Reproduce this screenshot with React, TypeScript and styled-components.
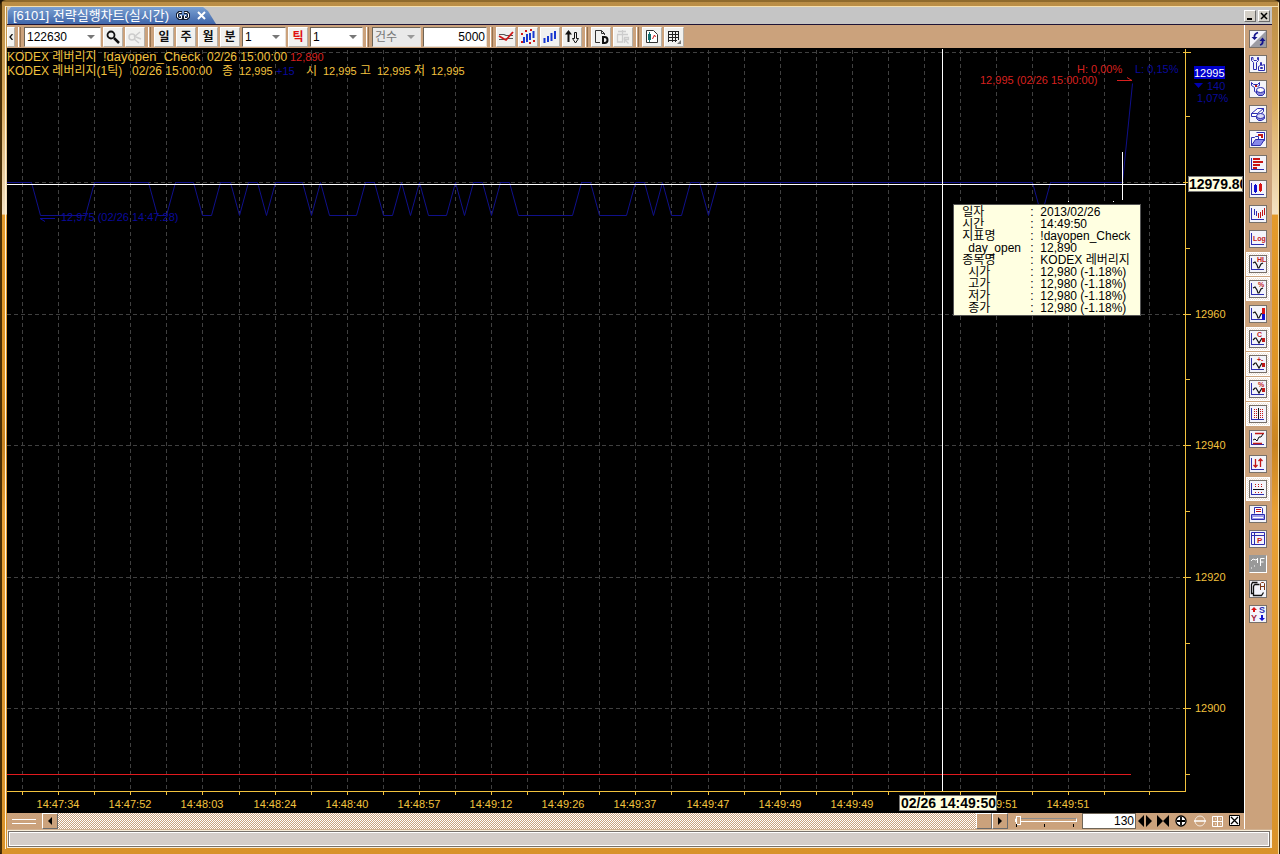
import React from 'react';
import styled, { createGlobalStyle, css } from 'styled-components';

const SANS = '"Liberation Sans", "Noto Sans CJK KR", sans-serif';
const TAN = '#cba27c';
const YELLOW = '#f2c23e';
const RED = '#d8201f';
const NAVY = '#0a0a9c';
const INK = '#2c2cb0';

const GlobalStyle = createGlobalStyle`
  * { box-sizing: border-box; }
  body { margin: 0; background: #1c1408; }
  button, input, select { font: inherit; margin: 0; padding: 0; }
`;

const Frame = styled.main`
  display: flex;
  flex-direction: column;
  padding: 7px 8px 7px 7px;
  font: 12px/16px ${SANS};
  background:
    linear-gradient(#f6dfae, #f6dfae) 6px 6px / calc(100% - 8px) 1px no-repeat,
    linear-gradient(#fff3d8, #fff3d8) 5px 6px / 1px calc(100% - 12px) no-repeat,
    linear-gradient(#4a3008, #4a3008) 0 0 / 2px 100% no-repeat,
    linear-gradient(#2a1a04, #2a1a04) 100% 0 / 1px 100% no-repeat,
    linear-gradient(#f8dca0, #f8dca0) calc(100% - 1px) 0 / 1px 100% no-repeat,
    linear-gradient(#2a1a04, #2a1a04) 0 100% / 100% 1px no-repeat,
    linear-gradient(#8f6a2c, #8f6a2c) 0 0 / 100% 2px no-repeat,
    linear-gradient(#b98c44 0, #d9a95c 12%, #f3e2c4 25%, #e39a2c 25.2%, #dd9426 45%, #c98422 52%, #e8a036 60%, #d8922a 100%);
  border-radius: 6px 6px 4px 4px;
`;

const TabStrip = styled.header`
  display: flex;
  align-items: stretch;
  height: 18px;
  padding-left: 1px;
  background: #c5c5c5;
  border-bottom: 1px solid #1e1436;
`;

const Tab = styled.h1`
  display: flex;
  align-items: center;
  gap: 7px;
  margin: 0;
  width: 208px;
  padding: 0 0 0 5px;
  color: #fff;
  font: 13px/17px ${SANS};
  white-space: nowrap;
  background: linear-gradient(#7aa0d2, #3f66aa);
  clip-path: polygon(3px 0, 195px 0, 200px 4px, 208px 100%, 0 100%, 0 4px);
`;

const TabClose = styled.button`
  display: flex;
  border: 0;
  background: none;
`;

const WindowButtons = styled.div`
  display: flex;
  gap: 2px;
  margin-left: auto;
  padding: 3px 2px 2px 0;
`;

const bevel = css`
  border: 1px solid;
  border-color: #fff #6b6b6b #6b6b6b #fff;
`;

const WindowButton = styled.button`
  display: flex;
  width: 12px;
  height: 12px;
  background: #d4d0c8;
  ${bevel}
`;

const Body = styled.div`
  display: flex;
`;

const MainColumn = styled.div`
  display: flex;
  flex-direction: column;
  flex: 1;
  min-width: 0;
`;

const Toolbar = styled.div`
  display: flex;
  align-items: center;
  gap: 2px;
  height: 23px;
  background: ${TAN};
`;

const Separator = styled.span`
  width: 3px;
  height: 20px;
  margin: 0 1px;
  border-left: 1px solid #fff;
  border-right: 1px solid #94714f;
`;

const ToolButton = styled.button<{ $tone?: string; $slim?: boolean }>`
  display: flex;
  align-items: center;
  justify-content: center;
  flex: none;
  width: ${(p) => (p.$slim ? '8px' : '20px')};
  height: 20px;
  color: ${(p) => p.$tone ?? '#111'};
  font: 700 12px/16px ${SANS};
  background: #f1f1ef;
  ${bevel}
  border-color: #fff #b5b0a8 #b5b0a8 #fff;
`;

const Combo = styled.label<{ $width: string; $off?: boolean }>`
  display: flex;
  align-items: center;
  flex: none;
  width: ${(p) => p.$width};
  height: 20px;
  padding-right: 5px;
  background: ${(p) => (p.$off ? '#e9e9e9' : '#fff')};
  border: 1px solid;
  border-color: #6e6558 #e8e0d8 #e8e0d8 #6e6558;

  select {
    flex: 1;
    min-width: 0;
    height: 16px;
    padding-left: 2px;
    border: 0;
    background: none;
    appearance: none;
    color: ${(p) => (p.$off ? '#777' : '#000')};
    opacity: 1;
  }
`;

const NumberBox = styled.input<{ $width: string }>`
  flex: none;
  width: ${(p) => p.$width};
  height: 20px;
  padding-right: 1px;
  text-align: right;
  color: #000;
  background: #fff;
  border: 1px solid;
  border-color: #6e6558 #e8e0d8 #e8e0d8 #6e6558;
`;

const ChartArea = styled.section`
  position: relative;
  background: #000;
`;

const Chart = styled.svg`
  display: block;
  width: 100%;
  height: auto;
  font: 11px ${SANS};
`;

const DataTip = styled.table`
  position: absolute;
  left: 76.5%;
  top: 20.4%;
  width: 188px;
  padding: 1px 0 1px 8px;
  border: 1px solid #555;
  border-collapse: separate;
  border-spacing: 0;
  table-layout: fixed;
  background: #ffffe1;
  color: #000;
  font: 12px/12px ${SANS};

  th, td {
    height: 12px;
    padding: 0;
    text-align: left;
    font-weight: 400;
    white-space: pre;
  }
  tr > :nth-child(1) { width: 68px; }
  tr > :nth-child(2) { width: 10px; }
`;

const TipName = styled.th<{ $nested?: boolean }>`
  && { padding-left: ${(p) => (p.$nested ? '6px' : '0')}; }
`;

const BottomStrip = styled.div`
  display: flex;
  align-items: center;
  height: 16px;
  background: ${TAN};
`;

const SplitGrip = styled.span`
  width: 24px;
  height: 5px;
  margin: 0 6px 0 5px;
  border: solid #fff;
  border-width: 1px 0;
`;

const ScrollTrack = styled.div`
  display: flex;
  flex: 1;
  justify-content: flex-end;
  height: 16px;
  background: repeating-conic-gradient(#fff 0 25%, ${TAN} 0 50%) 0 0 / 2px 2px;
`;

const ScrollPiece = styled.button`
  display: flex;
  align-items: center;
  justify-content: center;
  flex: none;
  width: 16px;
  height: 16px;
  background: ${TAN};
  ${bevel}
`;

const ZoomSlider = styled.label`
  display: flex;
  flex-direction: column;
  flex: none;
  width: 62px;
  margin: 0 5px 0 7px;

  input {
    width: 62px;
    height: 9px;
    appearance: none;
    background: none;
  }
  input::-webkit-slider-runnable-track {
    height: 4px;
    background: ${TAN};
    border: 1px solid #fff;
    border-top-color: #8c8c8c;
  }
  input::-webkit-slider-thumb {
    appearance: none;
    width: 5px;
    height: 9px;
    margin-top: -3px;
    background: ${TAN};
    border: 1px solid #fff;
  }
`;

const StripInput = styled(NumberBox)`
  height: 16px;
  border-color: #6e6558;
`;

const StripButtons = styled.div`
  display: flex;
  flex: none;
  gap: 2px;
  padding: 0 1px;
`;

const StripButton = styled.button`
  display: flex;
  border: 0;
  background: none;
`;

const SideBar = styled.nav`
  display: flex;
  flex-direction: column;
  align-items: center;
  gap: 1px;
  flex: none;
  width: 28px;
  padding-top: 2px;
  background: linear-gradient(90deg, #fff 1px, ${TAN} 1px);
`;

const SideButton = styled.button<{ $on?: boolean; $off?: boolean }>`
  display: flex;
  align-items: center;
  justify-content: center;
  width: 24px;
  height: 24px;
  border: 1px solid ${(p) => (p.$on ? '#fff' : 'transparent')};
  background: ${(p) => (p.$on ? `repeating-conic-gradient(#fff 0 25%, #eee0d4 0 50%) 0 0 / 2px 2px` : 'none')};

  svg {
    width: 18px;
    height: 18px;
    border: 1px solid;
    border-color: ${(p) => (p.$off ? '#999 #fff #fff #999' : '#77706a')};
    background: ${(p) => (p.$off ? '#999' : '#f4f4fa')};
  }
`;

const StatusBar = styled.footer`
  height: 19px;
  padding: 1px 2px 1px 1px;
  background: #f7ecd8;
  border-top: 1px solid #d0b090;
`;

const StatusPane = styled.div`
  height: 16px;
  background: #d4cdc9;
  border: 1px solid #77706a;
  box-shadow: inset 0 0 0 1px #fff;
`;

/* ---------- data ---------- */

const HI = 12980;
const LO = 12975;

// Tick number and traded price at every turn of the line.
const TURNS: [number, number][] = [
  [0, HI], [3, HI], [4, LO], [9, LO], [10, HI], [16, HI], [17, LO], [18, LO], [19, HI], [21, HI],
  [22, LO], [23, LO], [24, HI], [25, HI], [26, LO], [27, HI], [28, HI], [29, LO], [30, HI], [33, HI],
  [34, LO], [35, HI], [36, LO], [39, LO], [40, HI], [41, HI], [42, LO], [43, LO], [44, HI], [45, LO],
  [46, HI], [47, LO], [49, LO], [50, HI], [51, LO], [52, HI], [53, HI], [54, LO], [55, HI], [56, HI],
  [57, LO], [63, LO], [64, HI], [65, HI], [66, LO], [69, LO], [70, HI], [71, HI], [72, LO], [73, HI],
  [74, LO], [75, LO], [76, HI], [77, HI], [78, LO], [79, HI], [114, HI], [115, LO], [116, HI], [124, HI],
  [125, 12995],
];

// Slot number along the time axis and its label; slot 12 is taken by the cursor's time.
const TIMES: [number, string][] = [
  [0, '14:47:34'], [1, '14:47:52'], [2, '14:48:03'], [3, '14:48:24'], [4, '14:48:40'], [5, '14:48:57'],
  [6, '14:49:12'], [7, '14:49:26'], [8, '14:49:37'], [9, '14:49:47'], [10, '14:49:49'], [11, '14:49:49'],
  [13, '14:49:51'], [14, '14:49:51'],
];

const PRICES = [12960, 12940, 12920, 12900];

const TIP_ROWS: [string, string, boolean?][] = [
  ['일자', '2013/02/26'],
  ['시간', '14:49:50'],
  ['지표명', '!dayopen_Check'],
  ['day_open', '12,890', true],
  ['종목명', 'KODEX 레버리지'],
  ['시가', '12,980 (-1.18%)', true],
  ['고가', '12,980 (-1.18%)', true],
  ['저가', '12,980 (-1.18%)', true],
  ['종가', '12,980 (-1.18%)', true],
];

const PLOT_RIGHT = 1179;
const PLOT_BOTTOM = 743;
const tickX = (i: number) => Math.round(i * 9.02 - 3);
const priceY = (p: number) => Math.round(135 + (HI - p) * 6.58);

const GRID_X = [...Array.from({ length: 31 }, (_, k) => tickX(2 + 4 * k)), 1142];

/* ---------- chart ---------- */

function PriceChart() {
  return (
    <Chart viewBox="0 0 1237 765" role="img" aria-label="KODEX 레버리지 틱 차트">
      <g stroke="#404040" strokeDasharray="4 3" shapeRendering="crispEdges">
        {GRID_X.map((x) => <path key={x} d={`M${x + 0.5} 2V${PLOT_BOTTOM}`} />)}
        {[5, priceY(HI), ...PRICES.map(priceY)].map((y) => <path key={y} d={`M0 ${y - 0.5}H${PLOT_RIGHT}`} />)}
      </g>

      <polyline
        points={TURNS.map(([i, p]) => `${i === 0 ? 0 : tickX(i) + 0.5},${priceY(p) - 0.5}`).join(' ')}
        fill="none" stroke="#10108a"
      />
      <rect x="0" y={priceY(12890) - 1} width="1124" height="1" fill="#e01a1e" />

      <g stroke={YELLOW} shapeRendering="crispEdges">
        <path d={`M0 ${PLOT_BOTTOM}.5H${PLOT_RIGHT}M${PLOT_RIGHT - 0.5} 1V${PLOT_BOTTOM}`} fill="none" />
        {GRID_X.map((x) => <path key={x} d={`M${x + 0.5} ${PLOT_BOTTOM}v4`} />)}
        <path d="M1176 4.500h8M1176 134.500h8" />
        {PRICES.map((p) => <path key={p} d={`M1176 ${priceY(p) - 0.5}h8`} />)}
        {[12990, 12970, 12950, 12930, 12910, 12890].map((p) => (
          <path key={p} d={`M${PLOT_RIGHT} ${priceY(p) - 0.5}h4`} />
        ))}
      </g>

      <g fill={YELLOW}>
        {PRICES.map((p) => <text key={p} x="1188" y={priceY(p) + 3}>{p}</text>)}
        {TIMES.map(([slot, t]) => (
          <text key={slot} x={tickX(6 + 8 * slot)} y="760" textAnchor="middle">{t}</text>
        ))}
      </g>

      <g fill={YELLOW}>
        <text x="0" y="13" fontSize="12">KODEX 레버리지</text>
        <text x="96" y="13" fontSize="13">!dayopen_Check</text>
        <text x="200" y="13" fontSize="12">02/26 15:00:00</text>
        <text x="283" y="13" fill={RED}>12,890</text>
        <text x="0" y="27" fontSize="12">KODEX 레버리지(1틱)</text>
        <text x="125" y="27" fontSize="12">02/26 15:00:00</text>
        <text x="215" y="27" fontSize="12">종</text>
        <text x="232" y="27">12,995</text>
        <text x="269" y="27" fill={NAVY}>+15</text>
        <text x="299" y="27" fontSize="12">시</text>
        <text x="316" y="27">12,995</text>
        <text x="353" y="27" fontSize="12">고</text>
        <text x="370" y="27">12,995</text>
        <text x="407" y="27" fontSize="12">저</text>
        <text x="424" y="27">12,995</text>
      </g>

      <g fill={RED}>
        <text x="1070" y="25">H: 0,00%</text>
        <text x="973" y="36">12,995 (02/26 15:00:00)</text>
        <path d="M1110 32.500h15l-5 -3" fill="none" stroke={RED} />
      </g>
      <g fill={NAVY}>
        <text x="1128" y="25">L: 0,15%</text>
        <text x="54" y="173">12,975 (02/26 14:47:28)</text>
        <path d="M48 170.500H33l5 3" fill="none" stroke={NAVY} />
        <path d="M1187 35h9l-4.500 5z" fill="#0000b0" />
        <text x="1200" y="42">140</text>
        <text x="1190" y="54">1,07%</text>
      </g>
      <rect x="1187" y="18" width="31" height="13" fill="#0000cc" />
      <text x="1187" y="29" fill="#fff">12995</text>

      <g stroke="#fff" shapeRendering="crispEdges">
        <path d={`M935.5 1V${PLOT_BOTTOM}M0 136.500H${PLOT_RIGHT}M1115.500 104v48M1061 153.500h1M1106 153.500h1`} />
      </g>
      <g fontSize="14" fontWeight="700">
        <rect x="1181.500" y="128.500" width="54" height="15" fill="#ffffe1" stroke="#777" />
        <svg x="1182" y="129" width="53" height="15"><text x="0" y="12">12979.80</text></svg>
        <rect x="892.500" y="747.500" width="97" height="15" fill="#ffffe1" stroke="#777" />
        <text x="894" y="760">02/26 14:49:50</text>
      </g>
    </Chart>
  );
}

/* ---------- icons ---------- */

const Arrow = ({ color = '#777' }: { color?: string }) => (
  <svg width="8" height="4" viewBox="0 0 8 4" aria-hidden="true"><path d="M0 0h8L4 4z" fill={color} /></svg>
);

const Icon = ({ size = 16, children }: { size?: number; children: React.ReactNode }) => (
  <svg width={size} height={size} viewBox="0 0 16 16" fill="none" aria-hidden="true">{children}</svg>
);

const Axis = () => <path d="M1.500 2v11.500H14" stroke={INK} shapeRendering="crispEdges" />;
const Wave = ({ short }: { short?: boolean }) => (
  <path d={short ? 'M3 9l2-2h1l3 5 3-5' : 'M3 7l2-1 2 3 1 3h1l2-4 2-1'} stroke="#111" strokeWidth="1.200" />
);
const Mark = ({ x = 8, children }: { x?: number; children: string }) => (
  <text x={x} y="6" fontSize="7" fontWeight="700" fontFamily={SANS} fill="#c01818">{children}</text>
);
const RedDot = () => <path d="M12 7h3v4h-3z" fill="#c01818" />;

const SIDE: { name: string; on?: boolean; off?: boolean; art: React.ReactNode }[] = [
  { name: '새로고침', art: <><path d="M16 0v16H0z" fill="#9c9ca4" /><path d="M8 1.500Q4 3 4.500 6M10 14q3.500-1 2.500-5" stroke="#14148c" strokeWidth="1.800" /><path d="M1.500 6h6L4.500 9zM9.500 10h6l-3-3.500z" fill="#14148c" /></> },
  { name: '환경설정', art: <path d="M1.500 1.500v3l2 2v7h3v-7l2-2v-3h-1v2l-1 1H4l-1-1v-2zM8.500 14.500v-4l2-1v-3h1v3l3-1v6zM10.500 11.500h2v1h-2z" stroke={INK} /> },
  { name: '지표설정', art: <><path d="M1.500 1.500v3l3 2v4l2 1M9.500 1.500v3l-2 1M1.500 1.500l2 2h4l2-2" stroke={INK} /><path d="M5 4h2v2H5z" fill="#c01818" /><path d="M6.500 9.500v3l2 2h4l2-2v-3z" fill="#8888d8" stroke={INK} /><ellipse cx="10.500" cy="9" rx="4" ry="2.500" fill="#fff" stroke={INK} /></> },
  { name: '지우개', art: <><path d="M1.500 7.500l6-5h6v3l-6 5h-6zM1.500 7.500h6l6-5M7.500 7.500v3" stroke={INK} fill="#fff" /><path d="M6.500 10.500v2l2 2h3l3-2v-2z" fill="#8888d8" stroke={INK} /><ellipse cx="10.500" cy="10" rx="4" ry="2.500" fill="#dcdcf8" stroke={INK} /></> },
  { name: '불러오기', art: <><path d="M6.500 1.500h8v8h-3" stroke={INK} fill="#fff" /><path d="M8 3h5v4h-2V5H8z" fill="#c01818" /><path d="M1.500 14.500v-8h3l1-1h3v3" stroke={INK} /><path d="M1.500 14.500l4-6h9l-4 6z" fill="#8888e8" stroke={INK} /></> },
  { name: '매물대', art: <><Axis /><path d="M3 2h7v2H3zM3 5h10v2H3zM3 8h7v2H3zM3 11h4v2H3z" fill="#c81414" /></> },
  { name: '봉차트', art: <><Axis /><path d="M4 4h3v7H4zM5 3h1v9H5z" fill="#1010d0" /><path d="M9 3h3v7H9zM10 2h1v9h-1z" fill="#d81414" /></> },
  { name: '거래량', art: <><Axis /><path d="M4.500 3v6M6.500 5v5" stroke={INK} /><path d="M8.500 7v5M10.500 6v6M12.500 4v6M14.500 2v7" stroke="#c01818" /></> },
  { name: '로그', art: <><Axis /><text x="3" y="10" fontSize="7" fontWeight="700" fontFamily={SANS} fill="#c01818">Log</text></> },
  { name: '고저 표시', on: true, art: <><Axis /><Wave /><Mark x={7}>HL</Mark></> },
  { name: '등락률 표시', on: true, art: <><Axis /><Wave /><Mark>%</Mark></> },
  { name: '우측 가격', art: <><Axis /><Wave /><path d="M12 2h3v6h-3z" fill="#d81414" /><path d="M12 8h3v6h-3z" fill="#1010d0" /></> },
  { name: '현재가 표시', on: true, art: <><Axis /><Wave short /><Mark x={7}>C</Mark><RedDot /></> },
  { name: '대비 표시', on: true, art: <><Axis /><Wave short /><Mark x={7}>+-</Mark><RedDot /></> },
  { name: '대비율 표시', on: true, art: <><Axis /><Wave short /><Mark x={8}>%</Mark><RedDot /></> },
  { name: '세로 격자', on: true, art: <><Axis /><path d="M4.500 3v9M6.500 3v9M10.500 3v9M12.500 3v9" stroke="#c01818" strokeDasharray="1 1" /><path d="M8.500 2v11" stroke="#111" /></> },
  { name: '추세 범위', art: <><Axis /><path d="M5 2.500h9M3 12.500h9" stroke="#c01818" strokeWidth="1.500" /><path d="M3 9l2-1 2 2 2-4h2l2-3" stroke="#111" /></> },
  { name: '상하 반전', art: <><Axis /><path d="M5.500 3v8M3.500 9l2 2 2-2M10.500 11V3M8.500 5l2-2 2 2" stroke="#c01818" strokeWidth="1.300" /></> },
  { name: '가로 격자', on: true, art: <><Axis /><path d="M5 3.500h9M5 5.500h9M5 11.500h9" stroke="#c01818" strokeDasharray="1 2" /><path d="M3 8.500h11" stroke="#111" /></> },
  { name: '인쇄', art: <><path d="M4.500 7.500v-6h7l1 1v5" stroke={INK} fill="#fff" /><path d="M6 3.500h5M6 5.500h5" stroke="#c01818" /><path d="M1.500 8.500h13v5h-13z" fill="#9c9ce8" stroke={INK} /><path d="M3 11.500h10" stroke="#fff" /></> },
  { name: '인쇄 미리보기', art: <><path d="M1.500 1.500h13v12h-13zM1.500 4.500h13M4.500 1.500v12" stroke={INK} /><text x="7" y="12" fontSize="8" fontWeight="700" fontFamily={SANS} fill="#c01818">P</text></> },
  { name: '신호 표시', off: true, art: <path d="M1 5l2-2 3 1 2-2M10.500 10V2.500h4M10.500 6h3M7.500 3v4M1 12h1M4 10h1" stroke="#fff" /> },
  { name: '복사', art: <><path d="M3.500 12.500h-2v-9l1-2h5M4.500 3.500h5M4.500 3.500l-1 2v9h8l2-3" stroke="#111" strokeWidth="1.300" /><path d="M10.500 9V2.500l1-1h2l1 1V9M10.500 5.500h4" stroke="#803818" /></> },
  { name: '시스템 매매', art: <><path d="M4 1l3 3H1zM3 4h2v2H3z" fill="#d81414" /><text x="1" y="15" fontSize="9" fontWeight="700" fontFamily={SANS} fill="#a02040">Y</text><text x="9" y="7" fontSize="9" fontWeight="700" fontFamily={SANS} fill={INK}>S</text><path d="M12 15l-3-3h6zM11 9h2v3h-2z" fill="#1010d0" /></> },
];

export default function App() {
  return (
    <>
      <GlobalStyle />
      <Frame>
        <TabStrip>
          <Tab>
            [6101] 전략실행차트(실시간)
            <svg width="14" height="9" viewBox="0 0 14 9" fill="none" aria-hidden="true">
              <path d="M6 1.500H3L1.500 3v3L3 7.500h3v-3M8 1.500h3L12.500 3v3L11 7.500H8v-3" stroke="#101c30" strokeWidth="3" />
              <path d="M5.500 1.500H3L1.500 3v3L3 7.500h2.500v-3H4M8.500 1.500H11L12.500 3v3L11 7.500H8.500v-3H10" stroke="#fff" />
            </svg>
            <TabClose aria-label="탭 닫기">
              <svg width="9" height="9" viewBox="0 0 9 9"><path d="M1 1l7 7M8 1L1 8" stroke="#fff" strokeWidth="2" /></svg>
            </TabClose>
          </Tab>
          <WindowButtons>
            <WindowButton aria-label="최소화"><svg width="10" height="10" viewBox="0 0 10 10"><path d="M2 7h5v2H2z" /></svg></WindowButton>
            <WindowButton aria-label="닫기"><svg width="10" height="10" viewBox="0 0 10 10"><path d="M2 2l6 6M8 2L2 8" stroke="#000" strokeWidth="1.500" /></svg></WindowButton>
          </WindowButtons>
        </TabStrip>

        <Body>
          <MainColumn>
            <Toolbar>
              <ToolButton $slim aria-label="접기"><svg width="4" height="6" viewBox="0 0 4 6" fill="none"><path d="M3.500 0L1 3l2.500 3" stroke="#111" strokeWidth="1.300" /></svg></ToolButton>
              <Separator />
              <Combo $width="77px"><select aria-label="종목코드"><option>122630</option></select><Arrow /></Combo>
              <ToolButton aria-label="종목 검색"><Icon><circle cx="6" cy="6" r="3.500" stroke="#111" strokeWidth="1.800" /><path d="M9 9l5 5" stroke="#111" strokeWidth="2.500" /></Icon></ToolButton>
              <ToolButton disabled aria-label="검색 취소"><Icon><circle cx="5" cy="8" r="3" stroke="#ccc" strokeWidth="1.500" /><path d="M7 10l5 4M7 8l6-5M9 8l5 2" stroke="#ccc" strokeWidth="1.500" /></Icon></ToolButton>
              <Separator />
              <ToolButton>일</ToolButton>
              <ToolButton>주</ToolButton>
              <ToolButton>월</ToolButton>
              <ToolButton>분</ToolButton>
              <Combo $width="44px"><select aria-label="분 주기"><option>1</option></select><Arrow /></Combo>
              <ToolButton $tone="#e01010">틱</ToolButton>
              <Combo $width="53px"><select aria-label="틱 주기"><option>1</option></select><Arrow /></Combo>
              <Separator />
              <Combo $width="49px" $off><select aria-label="조회 기준" disabled><option>건수</option></select><Arrow color="#999" /></Combo>
              <NumberBox $width="64px" aria-label="조회 건수" defaultValue="5000" />
              <Separator />
              <ToolButton aria-label="선차트"><Icon><path d="M1 5.500h5l2 1h7M1 10.500h5l3-1h6" stroke="#555" strokeWidth="1.200" /><path d="M1 7l5 3 2 1 7-8" stroke="#d01818" strokeWidth="1.800" /></Icon></ToolButton>
              <ToolButton aria-label="신호 차트"><Icon><path d="M4 8v6M7 5v8M10 4v7M13.500 2v7" stroke="#1838d0" strokeWidth="2" /><path d="M1 4h2v2H1zM5 1h2v2H5zM1 12h2v2H1zM9 13h2v2H9zM13 11h2v2h-2zM10 0h2v2h-2z" fill="#d01818" /></Icon></ToolButton>
              <ToolButton aria-label="바차트"><Icon><path d="M2.500 9v5M6 7v6M9.500 4v8M13 2v8" stroke="#1838d0" strokeWidth="2" /></Icon></ToolButton>
              <ToolButton aria-label="정렬"><Icon><path d="M4.500 1L1 5.500h2.500V13h2V5.500H8z" fill="#111" /><path d="M11.500 14L8.500 9.500h2v-6h2v6h2z" stroke="#111" /></Icon></ToolButton>
              <Separator />
              <ToolButton aria-label="기본 설정"><Icon><path d="M7 13.500H2.500v-12h6l3 3V6M8.500 1.500v3h3" stroke="#333" /><path d="M10 8h1.500q3 0 3 3t-3 3H10z" stroke="#111" strokeWidth="2" /></Icon></ToolButton>
              <ToolButton disabled aria-label="초기화"><Icon><path d="M2 5.500h11M7.500 1v4M3 2.500h8M2.500 6v7h5v-7M9.500 14V8.500h4v2h-4l4 4" stroke="#ccc" strokeWidth="1.300" /></Icon></ToolButton>
              <Separator />
              <ToolButton aria-label="차트 보기"><Icon><path d="M2.500 1.500h7l4 4v8h-11z" stroke="#333" fill="#fff" /><path d="M4 5h3v6H4zM5 3h1v10H5z" fill="#107070" /><path d="M8.500 10l2-4 1 2" stroke="#d01818" /></Icon></ToolButton>
              <ToolButton aria-label="표 보기"><Icon><path d="M2.500 2v11M6.500 2v11M9.500 2v11M12.500 2v9M2 2.500h11M2 5.500h11M2 8.500h11M2 11.500h9" stroke="#222" /><path d="M15 11v4h-4z" fill="#777" /></Icon></ToolButton>
            </Toolbar>

            <ChartArea>
              <PriceChart />
              <DataTip>
                <tbody>
                  {TIP_ROWS.map(([name, value, nested]) => (
                    <tr key={name}>
                      <TipName scope="row" $nested={nested}>{name}</TipName>
                      <td>:</td>
                      <td>{value}</td>
                    </tr>
                  ))}
                </tbody>
              </DataTip>
            </ChartArea>

            <BottomStrip>
              <SplitGrip />
              <ScrollPiece aria-label="왼쪽으로"><svg width="4" height="8" viewBox="0 0 4 8"><path d="M4 0v8L0 4z" /></svg></ScrollPiece>
              <ScrollTrack><ScrollPiece aria-label="스크롤 위치" /></ScrollTrack>
              <ScrollPiece aria-label="오른쪽으로"><svg width="4" height="8" viewBox="0 0 4 8"><path d="M0 0v8l4-4z" /></svg></ScrollPiece>
              <ZoomSlider>
                <input type="range" min="0" max="100" defaultValue="0" aria-label="확대 비율" />
                <svg width="62" height="3" viewBox="0 0 62 3"><path d="M1 0h1v3H1zM29 0h1v3h-1zM58 0h1v3h-1z" /></svg>
              </ZoomSlider>
              <StripInput $width="54px" aria-label="표시 봉 수" defaultValue="130" />
              <StripButtons>
                <StripButton aria-label="넓히기"><Icon><path d="M7 2v12L1 8zM9 2v12l6-6z" fill="#000" /></Icon></StripButton>
                <StripButton aria-label="좁히기"><Icon><path d="M2 2v12l6-6zM14 2v12L8 8z" fill="#000" /></Icon></StripButton>
                <StripButton aria-label="확대"><Icon><circle cx="8" cy="8" r="5" fill="#fff" stroke="#000" strokeWidth="1.300" /><path d="M4 8h8M8 4v8" stroke="#000" strokeWidth="1.800" /></Icon></StripButton>
                <StripButton aria-label="축소"><Icon><circle cx="9" cy="8" r="5" stroke="#f4e8dc" /><path d="M3 8h12" stroke="#fff" strokeWidth="1.500" /></Icon></StripButton>
                <StripButton aria-label="전체 보기"><Icon><path d="M3.500 3.500h10v10h-10zM8.500 3v11M3 8.500h11M6 6h1M11 6h1M6 11h1M11 11h1" stroke="#fff" /></Icon></StripButton>
                <StripButton aria-label="닫기"><Icon><path d="M2.500 2.500h10v10h-10z" fill="#fff" stroke="#000" /><path d="M4 4l7 7M11 4l-7 7" stroke="#000" strokeWidth="1.300" /></Icon></StripButton>
              </StripButtons>
            </BottomStrip>
          </MainColumn>

          <SideBar aria-label="차트 도구">
            {SIDE.map(({ name, on, off, art }) => (
              <SideButton key={name} aria-label={name} $on={on} $off={off}><Icon>{art}</Icon></SideButton>
            ))}
          </SideBar>
        </Body>

        <StatusBar><StatusPane /></StatusBar>
      </Frame>
    </>
  );
}
